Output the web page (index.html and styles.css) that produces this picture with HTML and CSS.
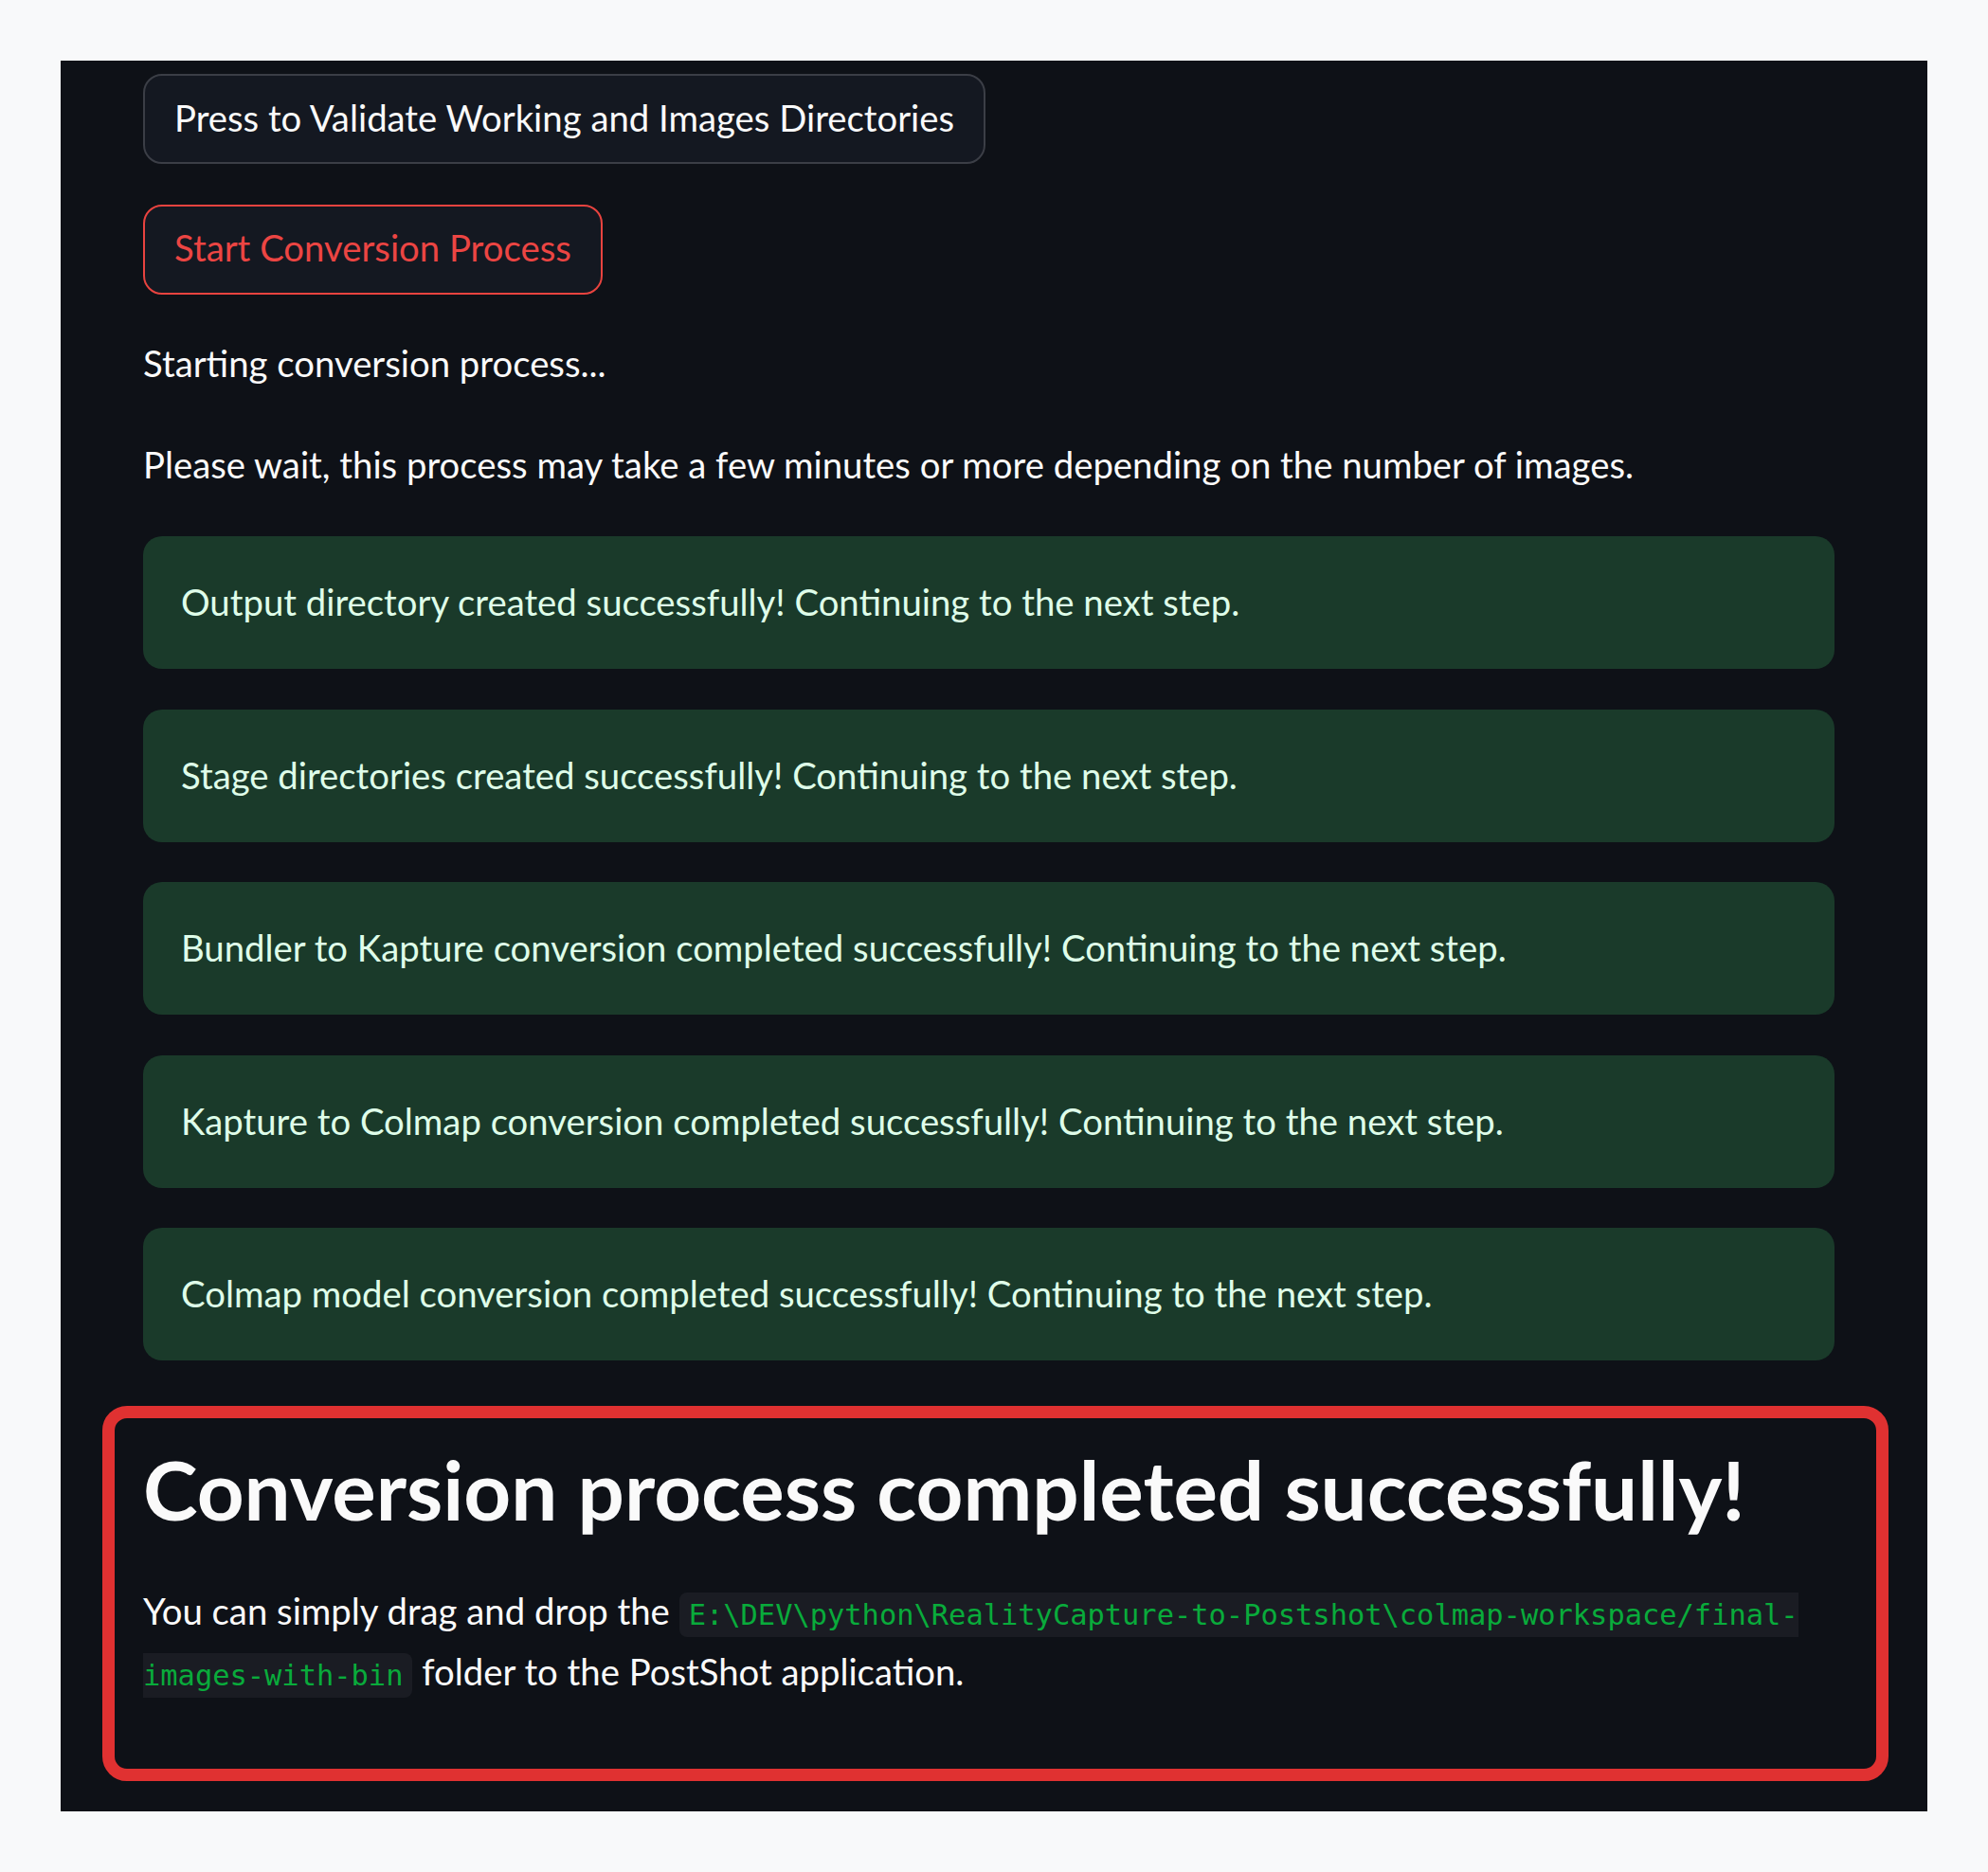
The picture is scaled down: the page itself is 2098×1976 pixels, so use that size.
FILE: index.html
```html
<!DOCTYPE html>
<html lang="en">
<head>
<meta charset="utf-8">
<title>Conversion</title>
<link rel="stylesheet" href="styles.css">
</head>
<body>
<main class="panel">
  <button class="btn">Press to Validate Working and Images Directories</button>
  <button class="btn btn-primary">Start Conversion Process</button>
  <p class="text">Starting conversion process...</p>
  <p class="text">Please wait, this process may take a few minutes or more depending on the number of images.</p>
  <div class="alert">Output directory created successfully! Continuing to the next step.</div>
  <div class="alert">Stage directories created successfully! Continuing to the next step.</div>
  <div class="alert">Bundler to Kapture conversion completed successfully! Continuing to the next step.</div>
  <div class="alert">Kapture to Colmap conversion completed successfully! Continuing to the next step.</div>
  <div class="alert">Colmap model conversion completed successfully! Continuing to the next step.</div>
  <section class="result">
    <h2 class="result-title">Conversion process completed successfully!</h2>
    <p class="result-text">You can simply drag and drop the <code class="path">E:\DEV\python\RealityCapture-to-Postshot\colmap-workspace/final-images-with-bin</code> folder to the PostShot application.</p>
  </section>
</main>
</body>
</html>
```
FILE: styles.css
```css
html, body {
  margin: 0;
  padding: 0;
}
body {
  background: #f8f9fa;
  padding: 64px;
  font-family: Lato, "Noto Sans", sans-serif;
}
.panel {
  box-sizing: border-box;
  width: 1970px;
  height: 1848px;
  background: #0e1117;
  padding: 14px 98px 0 87px;
  display: flex;
  flex-direction: column;
  align-items: flex-start;
  gap: 42.5px;
  color: #fafafa;
  font-size: 38.3px;
  line-height: 64px;
}
.btn {
  box-sizing: border-box;
  height: 95px;
  padding: 0 31px 4px;
  border: 2px solid #3b3e46;
  border-radius: 20px;
  background: #141821;
  color: #fafafa;
  font-family: inherit;
  font-size: 38.3px;
  line-height: 64px;
}
.btn-primary {
  border-color: #e8433f;
  color: #ec4543;
}
.text {
  margin: -2px 0 2px;
}
.alert {
  box-sizing: border-box;
  align-self: stretch;
  height: 140px;
  padding: 37px 40px 39px;
  border-radius: 20px;
  background: #1a3a2a;
  color: #dffde9;
}
.result {
  align-self: stretch;
  margin: 5.5px -57px 0 -43px;
  border: 13px solid #e03131;
  border-radius: 26px;
  padding: 23px 44px 0 30px;
  height: 396px;
  box-sizing: border-box;
}
.result-title {
  margin: 0;
  font-size: 87px;
  line-height: 1.2;
  font-weight: 700;
  color: #fafafa;
}
.result-text {
  margin: 44px 0 0;
}
.path {
  font-family: "DejaVu Sans Mono", "Liberation Mono", monospace;
  font-size: 30.4px;
  line-height: 1;
  color: #09ab3b;
  background: #1a1c23;
  padding: 6px 10px;
  border-radius: 8px;
}
```
